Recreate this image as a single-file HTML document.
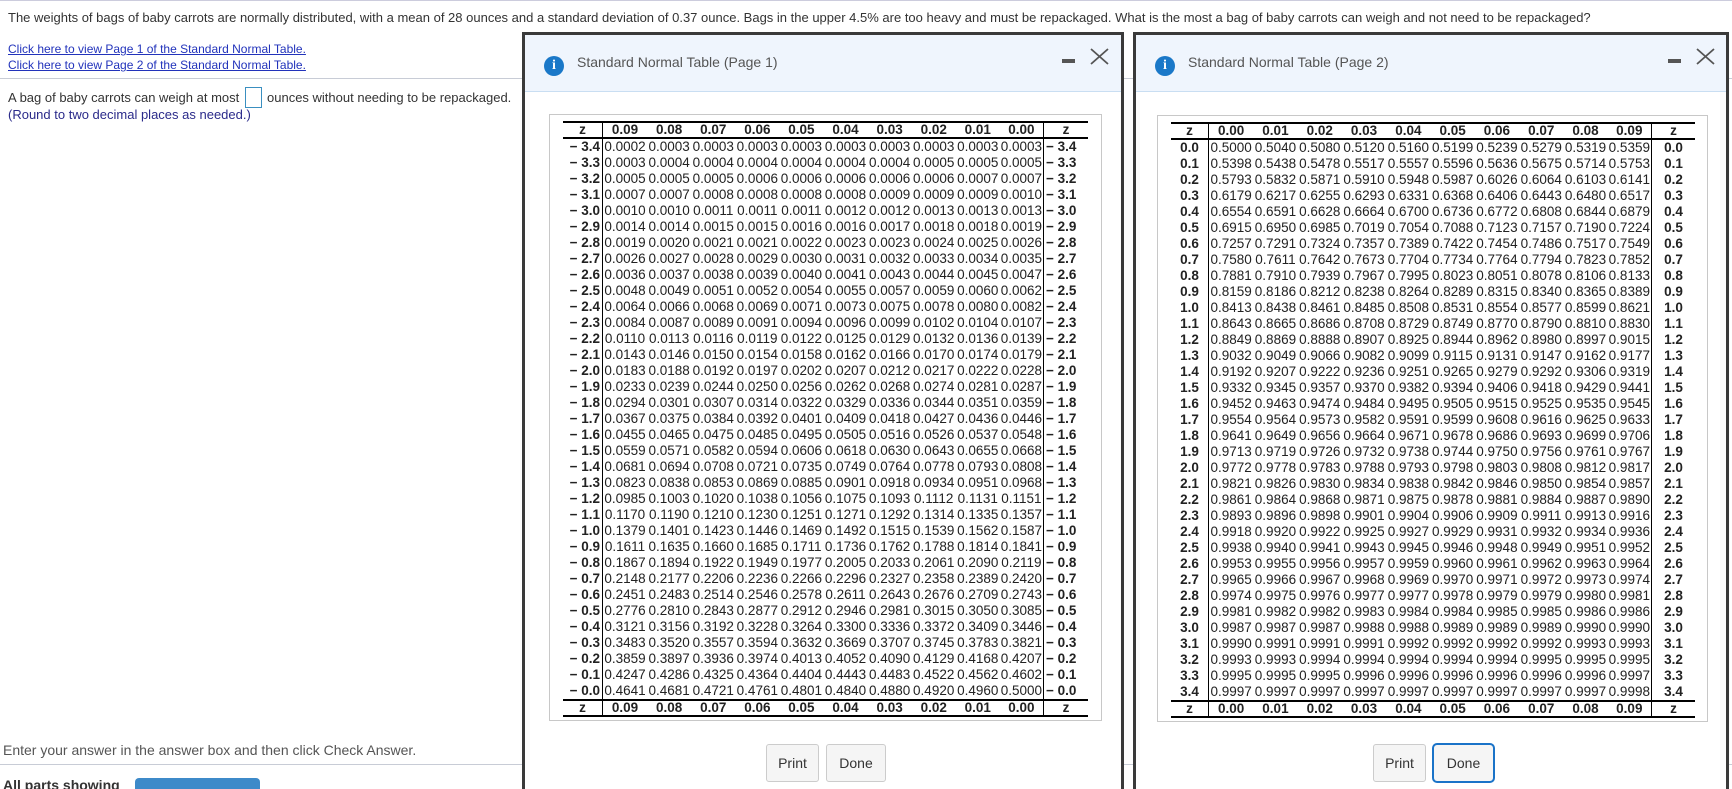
<!DOCTYPE html>
<html><head><meta charset="utf-8"><style>
*{box-sizing:border-box;margin:0;padding:0}
html{overflow:hidden;height:789px}
body{width:1732px;height:789px;overflow:hidden;position:relative;background:#fff;font-family:"Liberation Sans",Arial,sans-serif;color:#333}
.a{position:absolute;white-space:nowrap}
a{color:#2233bb;text-decoration:underline}
.dlg{position:absolute;top:32px;height:765px;border:3px solid #3a3a3a;background:#fff}
.hdr{position:absolute;left:0;top:0;right:0;height:57px;background:#eff5fd;border-bottom:1px solid #c9def2}
.ic{position:absolute;width:20px;height:20px;border-radius:50%;background:#1a78c8;color:#fff;font:bold 14px "Liberation Serif",serif;text-align:center;line-height:20px}
.tt{position:absolute;font-size:14px;color:#555;top:19px}
.mn{position:absolute;width:13px;height:4px;background:#555}
.box{position:absolute;border:1px solid #c8c8c8}
table{position:absolute;border-collapse:separate;border-spacing:0;table-layout:fixed;font-size:13.5px;color:#222}
td,th{padding:0;height:16px;line-height:16px;text-align:center;white-space:nowrap;overflow:visible}
td{font-weight:normal}
th{font-weight:bold}
tr.h th{height:18px;line-height:14px;border-top:2px solid #000;border-bottom:2px solid #000}
tr.f th{height:18px;line-height:14px;border-top:2px solid #000;border-bottom:2px solid #000}
.t1 tr>*:first-child{text-align:right;padding-right:2px;border-right:1px solid #000}
.t1 tr.h>*:first-child,.t1 tr.f>*:first-child{text-align:center;padding-right:0}
.t1 tr>*:nth-child(11){border-right:1px solid #000}
.t1 tr:not(.h):not(.f)>*:last-child{text-align:left;padding-left:2px}
.t2 tr>*:first-child{border-right:1px solid #000}
.t2 tr>*:nth-child(11){border-right:1px solid #000}
.btn{position:absolute;background:#f5f5f5;border:1px solid #ccc;border-radius:3px;font-size:14px;color:#333;text-align:center}
</style></head><body>
<div class="a" style="left:0;top:0;width:1732px;height:1px;background:#ccd"></div>
<div class="a" style="left:8px;top:10px;font-size:13px">The weights of bags of baby carrots are normally distributed, with a mean of 28 ounces and a standard deviation of 0.37 ounce. Bags in the upper 4.5% are too heavy and must be repackaged. What is the most a bag of baby carrots can weigh and not need to be repackaged?</div>
<div class="a" style="left:8px;top:41px;font-size:12px;line-height:16px"><a>Click here to view Page 1 of the Standard Normal Table.</a><br><a>Click here to view Page 2 of the Standard Normal Table.</a></div>
<div class="a" style="left:0;top:78px;width:1732px;height:1px;background:#c8ccd6"></div>
<div class="a" style="left:8px;top:90px;font-size:13px">A bag of baby carrots can weigh at most</div>
<div class="a" style="left:245px;top:87px;width:17px;height:21px;border:1px solid #3a8fc0"></div>
<div class="a" style="left:267px;top:90px;font-size:13px">ounces without needing to be repackaged.</div>
<div class="a" style="left:8px;top:107px;font-size:13px;color:#2a2a8a">(Round to two decimal places as needed.)</div>
<div class="a" style="left:3px;top:742px;font-size:14px;color:#555">Enter your answer in the answer box and then click Check Answer.</div>
<div class="a" style="left:0;top:764px;width:1732px;height:1px;background:#c8ccd6"></div>
<div class="a" style="left:3px;top:777px;font-size:14px;font-weight:bold;color:#333">All parts showing</div>
<div class="a" style="left:135px;top:778px;width:125px;height:20px;background:#3d8ac9;border-radius:4px"></div>

<div class="dlg" style="left:522px;width:602px">
<div class="hdr"><div class="ic" style="left:19px;top:21px">i</div><div class="tt" style="left:52px">Standard Normal Table (Page 1)</div>
<div class="mn" style="left:537px;top:24px"></div>
<svg class="a" style="left:565px;top:13px" width="19" height="17"><path d="M1 1L18 16M18 1L1 16" stroke="#555" stroke-width="1.8"/></svg></div>
</div>
<div class="box" style="left:549px;top:114px;width:553px;height:607px"></div>
<table class="t1" style="left:563px;top:121px;width:525px">
<col style="width:40px"><col span="10" style="width:44.1px"><col style="width:44px">
<tr class="h"><th>z<th>0.09<th>0.08<th>0.07<th>0.06<th>0.05<th>0.04<th>0.03<th>0.02<th>0.01<th>0.00<th>z</tr>
<tr><th>− 3.4<td>0.0002<td>0.0003<td>0.0003<td>0.0003<td>0.0003<td>0.0003<td>0.0003<td>0.0003<td>0.0003<td>0.0003<th>− 3.4</tr>
<tr><th>− 3.3<td>0.0003<td>0.0004<td>0.0004<td>0.0004<td>0.0004<td>0.0004<td>0.0004<td>0.0005<td>0.0005<td>0.0005<th>− 3.3</tr>
<tr><th>− 3.2<td>0.0005<td>0.0005<td>0.0005<td>0.0006<td>0.0006<td>0.0006<td>0.0006<td>0.0006<td>0.0007<td>0.0007<th>− 3.2</tr>
<tr><th>− 3.1<td>0.0007<td>0.0007<td>0.0008<td>0.0008<td>0.0008<td>0.0008<td>0.0009<td>0.0009<td>0.0009<td>0.0010<th>− 3.1</tr>
<tr><th>− 3.0<td>0.0010<td>0.0010<td>0.0011<td>0.0011<td>0.0011<td>0.0012<td>0.0012<td>0.0013<td>0.0013<td>0.0013<th>− 3.0</tr>
<tr><th>− 2.9<td>0.0014<td>0.0014<td>0.0015<td>0.0015<td>0.0016<td>0.0016<td>0.0017<td>0.0018<td>0.0018<td>0.0019<th>− 2.9</tr>
<tr><th>− 2.8<td>0.0019<td>0.0020<td>0.0021<td>0.0021<td>0.0022<td>0.0023<td>0.0023<td>0.0024<td>0.0025<td>0.0026<th>− 2.8</tr>
<tr><th>− 2.7<td>0.0026<td>0.0027<td>0.0028<td>0.0029<td>0.0030<td>0.0031<td>0.0032<td>0.0033<td>0.0034<td>0.0035<th>− 2.7</tr>
<tr><th>− 2.6<td>0.0036<td>0.0037<td>0.0038<td>0.0039<td>0.0040<td>0.0041<td>0.0043<td>0.0044<td>0.0045<td>0.0047<th>− 2.6</tr>
<tr><th>− 2.5<td>0.0048<td>0.0049<td>0.0051<td>0.0052<td>0.0054<td>0.0055<td>0.0057<td>0.0059<td>0.0060<td>0.0062<th>− 2.5</tr>
<tr><th>− 2.4<td>0.0064<td>0.0066<td>0.0068<td>0.0069<td>0.0071<td>0.0073<td>0.0075<td>0.0078<td>0.0080<td>0.0082<th>− 2.4</tr>
<tr><th>− 2.3<td>0.0084<td>0.0087<td>0.0089<td>0.0091<td>0.0094<td>0.0096<td>0.0099<td>0.0102<td>0.0104<td>0.0107<th>− 2.3</tr>
<tr><th>− 2.2<td>0.0110<td>0.0113<td>0.0116<td>0.0119<td>0.0122<td>0.0125<td>0.0129<td>0.0132<td>0.0136<td>0.0139<th>− 2.2</tr>
<tr><th>− 2.1<td>0.0143<td>0.0146<td>0.0150<td>0.0154<td>0.0158<td>0.0162<td>0.0166<td>0.0170<td>0.0174<td>0.0179<th>− 2.1</tr>
<tr><th>− 2.0<td>0.0183<td>0.0188<td>0.0192<td>0.0197<td>0.0202<td>0.0207<td>0.0212<td>0.0217<td>0.0222<td>0.0228<th>− 2.0</tr>
<tr><th>− 1.9<td>0.0233<td>0.0239<td>0.0244<td>0.0250<td>0.0256<td>0.0262<td>0.0268<td>0.0274<td>0.0281<td>0.0287<th>− 1.9</tr>
<tr><th>− 1.8<td>0.0294<td>0.0301<td>0.0307<td>0.0314<td>0.0322<td>0.0329<td>0.0336<td>0.0344<td>0.0351<td>0.0359<th>− 1.8</tr>
<tr><th>− 1.7<td>0.0367<td>0.0375<td>0.0384<td>0.0392<td>0.0401<td>0.0409<td>0.0418<td>0.0427<td>0.0436<td>0.0446<th>− 1.7</tr>
<tr><th>− 1.6<td>0.0455<td>0.0465<td>0.0475<td>0.0485<td>0.0495<td>0.0505<td>0.0516<td>0.0526<td>0.0537<td>0.0548<th>− 1.6</tr>
<tr><th>− 1.5<td>0.0559<td>0.0571<td>0.0582<td>0.0594<td>0.0606<td>0.0618<td>0.0630<td>0.0643<td>0.0655<td>0.0668<th>− 1.5</tr>
<tr><th>− 1.4<td>0.0681<td>0.0694<td>0.0708<td>0.0721<td>0.0735<td>0.0749<td>0.0764<td>0.0778<td>0.0793<td>0.0808<th>− 1.4</tr>
<tr><th>− 1.3<td>0.0823<td>0.0838<td>0.0853<td>0.0869<td>0.0885<td>0.0901<td>0.0918<td>0.0934<td>0.0951<td>0.0968<th>− 1.3</tr>
<tr><th>− 1.2<td>0.0985<td>0.1003<td>0.1020<td>0.1038<td>0.1056<td>0.1075<td>0.1093<td>0.1112<td>0.1131<td>0.1151<th>− 1.2</tr>
<tr><th>− 1.1<td>0.1170<td>0.1190<td>0.1210<td>0.1230<td>0.1251<td>0.1271<td>0.1292<td>0.1314<td>0.1335<td>0.1357<th>− 1.1</tr>
<tr><th>− 1.0<td>0.1379<td>0.1401<td>0.1423<td>0.1446<td>0.1469<td>0.1492<td>0.1515<td>0.1539<td>0.1562<td>0.1587<th>− 1.0</tr>
<tr><th>− 0.9<td>0.1611<td>0.1635<td>0.1660<td>0.1685<td>0.1711<td>0.1736<td>0.1762<td>0.1788<td>0.1814<td>0.1841<th>− 0.9</tr>
<tr><th>− 0.8<td>0.1867<td>0.1894<td>0.1922<td>0.1949<td>0.1977<td>0.2005<td>0.2033<td>0.2061<td>0.2090<td>0.2119<th>− 0.8</tr>
<tr><th>− 0.7<td>0.2148<td>0.2177<td>0.2206<td>0.2236<td>0.2266<td>0.2296<td>0.2327<td>0.2358<td>0.2389<td>0.2420<th>− 0.7</tr>
<tr><th>− 0.6<td>0.2451<td>0.2483<td>0.2514<td>0.2546<td>0.2578<td>0.2611<td>0.2643<td>0.2676<td>0.2709<td>0.2743<th>− 0.6</tr>
<tr><th>− 0.5<td>0.2776<td>0.2810<td>0.2843<td>0.2877<td>0.2912<td>0.2946<td>0.2981<td>0.3015<td>0.3050<td>0.3085<th>− 0.5</tr>
<tr><th>− 0.4<td>0.3121<td>0.3156<td>0.3192<td>0.3228<td>0.3264<td>0.3300<td>0.3336<td>0.3372<td>0.3409<td>0.3446<th>− 0.4</tr>
<tr><th>− 0.3<td>0.3483<td>0.3520<td>0.3557<td>0.3594<td>0.3632<td>0.3669<td>0.3707<td>0.3745<td>0.3783<td>0.3821<th>− 0.3</tr>
<tr><th>− 0.2<td>0.3859<td>0.3897<td>0.3936<td>0.3974<td>0.4013<td>0.4052<td>0.4090<td>0.4129<td>0.4168<td>0.4207<th>− 0.2</tr>
<tr><th>− 0.1<td>0.4247<td>0.4286<td>0.4325<td>0.4364<td>0.4404<td>0.4443<td>0.4483<td>0.4522<td>0.4562<td>0.4602<th>− 0.1</tr>
<tr><th>− 0.0<td>0.4641<td>0.4681<td>0.4721<td>0.4761<td>0.4801<td>0.4840<td>0.4880<td>0.4920<td>0.4960<td>0.5000<th>− 0.0</tr>
<tr class="f"><th>z<th>0.09<th>0.08<th>0.07<th>0.06<th>0.05<th>0.04<th>0.03<th>0.02<th>0.01<th>0.00<th>z</tr>
</table>
<div class="btn" style="left:766px;top:744px;width:53px;height:38px;line-height:36px">Print</div>
<div class="btn" style="left:826px;top:744px;width:60px;height:38px;line-height:36px">Done</div>

<div class="dlg" style="left:1133px;width:596px">
<div class="hdr"><div class="ic" style="left:19px;top:21px">i</div><div class="tt" style="left:52px">Standard Normal Table (Page 2)</div>
<div class="mn" style="left:532px;top:24px"></div>
<svg class="a" style="left:560px;top:13px" width="19" height="17"><path d="M1 1L18 16M18 1L1 16" stroke="#555" stroke-width="1.8"/></svg></div>
</div>
<div class="box" style="left:1157px;top:115px;width:551px;height:607px"></div>
<table class="t2" style="left:1171px;top:122px;width:524px">
<col style="width:38px"><col span="10" style="width:44.3px"><col style="width:43px">
<tr class="h"><th>z<th>0.00<th>0.01<th>0.02<th>0.03<th>0.04<th>0.05<th>0.06<th>0.07<th>0.08<th>0.09<th>z</tr>
<tr><th>0.0<td>0.5000<td>0.5040<td>0.5080<td>0.5120<td>0.5160<td>0.5199<td>0.5239<td>0.5279<td>0.5319<td>0.5359<th>0.0</tr>
<tr><th>0.1<td>0.5398<td>0.5438<td>0.5478<td>0.5517<td>0.5557<td>0.5596<td>0.5636<td>0.5675<td>0.5714<td>0.5753<th>0.1</tr>
<tr><th>0.2<td>0.5793<td>0.5832<td>0.5871<td>0.5910<td>0.5948<td>0.5987<td>0.6026<td>0.6064<td>0.6103<td>0.6141<th>0.2</tr>
<tr><th>0.3<td>0.6179<td>0.6217<td>0.6255<td>0.6293<td>0.6331<td>0.6368<td>0.6406<td>0.6443<td>0.6480<td>0.6517<th>0.3</tr>
<tr><th>0.4<td>0.6554<td>0.6591<td>0.6628<td>0.6664<td>0.6700<td>0.6736<td>0.6772<td>0.6808<td>0.6844<td>0.6879<th>0.4</tr>
<tr><th>0.5<td>0.6915<td>0.6950<td>0.6985<td>0.7019<td>0.7054<td>0.7088<td>0.7123<td>0.7157<td>0.7190<td>0.7224<th>0.5</tr>
<tr><th>0.6<td>0.7257<td>0.7291<td>0.7324<td>0.7357<td>0.7389<td>0.7422<td>0.7454<td>0.7486<td>0.7517<td>0.7549<th>0.6</tr>
<tr><th>0.7<td>0.7580<td>0.7611<td>0.7642<td>0.7673<td>0.7704<td>0.7734<td>0.7764<td>0.7794<td>0.7823<td>0.7852<th>0.7</tr>
<tr><th>0.8<td>0.7881<td>0.7910<td>0.7939<td>0.7967<td>0.7995<td>0.8023<td>0.8051<td>0.8078<td>0.8106<td>0.8133<th>0.8</tr>
<tr><th>0.9<td>0.8159<td>0.8186<td>0.8212<td>0.8238<td>0.8264<td>0.8289<td>0.8315<td>0.8340<td>0.8365<td>0.8389<th>0.9</tr>
<tr><th>1.0<td>0.8413<td>0.8438<td>0.8461<td>0.8485<td>0.8508<td>0.8531<td>0.8554<td>0.8577<td>0.8599<td>0.8621<th>1.0</tr>
<tr><th>1.1<td>0.8643<td>0.8665<td>0.8686<td>0.8708<td>0.8729<td>0.8749<td>0.8770<td>0.8790<td>0.8810<td>0.8830<th>1.1</tr>
<tr><th>1.2<td>0.8849<td>0.8869<td>0.8888<td>0.8907<td>0.8925<td>0.8944<td>0.8962<td>0.8980<td>0.8997<td>0.9015<th>1.2</tr>
<tr><th>1.3<td>0.9032<td>0.9049<td>0.9066<td>0.9082<td>0.9099<td>0.9115<td>0.9131<td>0.9147<td>0.9162<td>0.9177<th>1.3</tr>
<tr><th>1.4<td>0.9192<td>0.9207<td>0.9222<td>0.9236<td>0.9251<td>0.9265<td>0.9279<td>0.9292<td>0.9306<td>0.9319<th>1.4</tr>
<tr><th>1.5<td>0.9332<td>0.9345<td>0.9357<td>0.9370<td>0.9382<td>0.9394<td>0.9406<td>0.9418<td>0.9429<td>0.9441<th>1.5</tr>
<tr><th>1.6<td>0.9452<td>0.9463<td>0.9474<td>0.9484<td>0.9495<td>0.9505<td>0.9515<td>0.9525<td>0.9535<td>0.9545<th>1.6</tr>
<tr><th>1.7<td>0.9554<td>0.9564<td>0.9573<td>0.9582<td>0.9591<td>0.9599<td>0.9608<td>0.9616<td>0.9625<td>0.9633<th>1.7</tr>
<tr><th>1.8<td>0.9641<td>0.9649<td>0.9656<td>0.9664<td>0.9671<td>0.9678<td>0.9686<td>0.9693<td>0.9699<td>0.9706<th>1.8</tr>
<tr><th>1.9<td>0.9713<td>0.9719<td>0.9726<td>0.9732<td>0.9738<td>0.9744<td>0.9750<td>0.9756<td>0.9761<td>0.9767<th>1.9</tr>
<tr><th>2.0<td>0.9772<td>0.9778<td>0.9783<td>0.9788<td>0.9793<td>0.9798<td>0.9803<td>0.9808<td>0.9812<td>0.9817<th>2.0</tr>
<tr><th>2.1<td>0.9821<td>0.9826<td>0.9830<td>0.9834<td>0.9838<td>0.9842<td>0.9846<td>0.9850<td>0.9854<td>0.9857<th>2.1</tr>
<tr><th>2.2<td>0.9861<td>0.9864<td>0.9868<td>0.9871<td>0.9875<td>0.9878<td>0.9881<td>0.9884<td>0.9887<td>0.9890<th>2.2</tr>
<tr><th>2.3<td>0.9893<td>0.9896<td>0.9898<td>0.9901<td>0.9904<td>0.9906<td>0.9909<td>0.9911<td>0.9913<td>0.9916<th>2.3</tr>
<tr><th>2.4<td>0.9918<td>0.9920<td>0.9922<td>0.9925<td>0.9927<td>0.9929<td>0.9931<td>0.9932<td>0.9934<td>0.9936<th>2.4</tr>
<tr><th>2.5<td>0.9938<td>0.9940<td>0.9941<td>0.9943<td>0.9945<td>0.9946<td>0.9948<td>0.9949<td>0.9951<td>0.9952<th>2.5</tr>
<tr><th>2.6<td>0.9953<td>0.9955<td>0.9956<td>0.9957<td>0.9959<td>0.9960<td>0.9961<td>0.9962<td>0.9963<td>0.9964<th>2.6</tr>
<tr><th>2.7<td>0.9965<td>0.9966<td>0.9967<td>0.9968<td>0.9969<td>0.9970<td>0.9971<td>0.9972<td>0.9973<td>0.9974<th>2.7</tr>
<tr><th>2.8<td>0.9974<td>0.9975<td>0.9976<td>0.9977<td>0.9977<td>0.9978<td>0.9979<td>0.9979<td>0.9980<td>0.9981<th>2.8</tr>
<tr><th>2.9<td>0.9981<td>0.9982<td>0.9982<td>0.9983<td>0.9984<td>0.9984<td>0.9985<td>0.9985<td>0.9986<td>0.9986<th>2.9</tr>
<tr><th>3.0<td>0.9987<td>0.9987<td>0.9987<td>0.9988<td>0.9988<td>0.9989<td>0.9989<td>0.9989<td>0.9990<td>0.9990<th>3.0</tr>
<tr><th>3.1<td>0.9990<td>0.9991<td>0.9991<td>0.9991<td>0.9992<td>0.9992<td>0.9992<td>0.9992<td>0.9993<td>0.9993<th>3.1</tr>
<tr><th>3.2<td>0.9993<td>0.9993<td>0.9994<td>0.9994<td>0.9994<td>0.9994<td>0.9994<td>0.9995<td>0.9995<td>0.9995<th>3.2</tr>
<tr><th>3.3<td>0.9995<td>0.9995<td>0.9995<td>0.9996<td>0.9996<td>0.9996<td>0.9996<td>0.9996<td>0.9996<td>0.9997<th>3.3</tr>
<tr><th>3.4<td>0.9997<td>0.9997<td>0.9997<td>0.9997<td>0.9997<td>0.9997<td>0.9997<td>0.9997<td>0.9997<td>0.9998<th>3.4</tr>
<tr class="f"><th>z<th>0.00<th>0.01<th>0.02<th>0.03<th>0.04<th>0.05<th>0.06<th>0.07<th>0.08<th>0.09<th>z</tr>
</table>
<div class="btn" style="left:1373px;top:744px;width:53px;height:38px;line-height:36px">Print</div>
<div class="btn" style="left:1432px;top:743px;width:63px;height:40px;line-height:36px;border:2px solid #1a73c8;border-radius:5px">Done</div>
</body></html>
